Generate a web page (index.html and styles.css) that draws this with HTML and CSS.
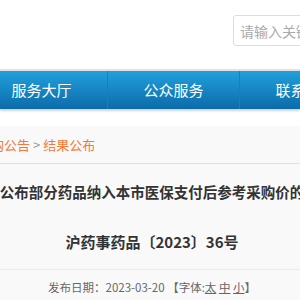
FILE: index.html
```html
<!DOCTYPE html>
<html lang="zh-CN">
<head>
  <meta charset="UTF-8">
  <title>结果公布</title>
  <link rel="stylesheet" href="styles.css">
</head>
<body>

  <div class="top">
    <div class="search">
      <input type="text" placeholder="请输入关键字">
    </div>
  </div>

  <div class="nav">
    <div class="nav-items">
      <a href="#">首页</a>
      <a href="#">服务大厅</a>
      <a href="#">公众服务</a>
      <a href="#">联系我们</a>
    </div>
  </div>

  <div class="content">
    <div class="crumbs">
      <a href="#">首页</a> &gt; <a href="#">采购公告</a> &gt; <a href="#">结果公布</a>
    </div>

    <div class="article">
      <h1>关于公布部分药品纳入本市医保支付后参考采购价的通知</h1>
      <h2>沪药事药品〔2023〕36号</h2>
      <div class="info">
        发布日期：2023-03-20 【字体:<a href="#">太</a> <a href="#">中</a> <a href="#">小</a>】
      </div>
    </div>
  </div>

</body>
</html>
```

FILE: styles.css
```css
html, body {
  margin: 0;
  padding: 0;
  overflow: hidden;
}

body {
  font-family: "Noto Sans CJK SC", "Microsoft YaHei", sans-serif;
  background: #fff;
  color: #333;
  width: 300px;
  height: 300px;
}

a {
  color: inherit;
  text-decoration: none;
}

.top {
  height: 69px;
  padding-left: 233px;
  box-sizing: border-box;
  padding-top: 15px;
}

.search input {
  width: 120px;
  height: 31px;
  box-sizing: border-box;
  border: 1px solid #ddd;
  border-radius: 3px;
  padding: 0 6px;
  font-family: inherit;
  font-size: 14px;
  color: #666;
  outline: none;
}

.search input::placeholder {
  color: #aaa;
}

.nav {
  border-top: 2px solid #e2e2e2;
  height: 38px;
  background: linear-gradient(to bottom, #22a0dc, #0b6ba9);
  box-shadow: 0 2px 2px rgba(0, 0, 0, 0.18);
  overflow: hidden;
}

.nav-items {
  display: flex;
  margin-left: -157px;
}

.nav-items a {
  flex: none;
  width: 132px;
  line-height: 38px;
  text-align: center;
  color: #fff;
  font-size: 15px;
  border-left: 1px solid #1a7fb8;
  box-sizing: border-box;
}

.content {
  margin-top: 17px;
  background: #f9f9f9;
  height: 200px;
  width: 300px;
  overflow: hidden;
}

.crumbs {
  padding: 8px 0 7px;
  line-height: 22px;
  font-size: 13px;
  color: #999;
  border-bottom: 1px solid #e0e0e0;
  margin-left: -61px;
  white-space: nowrap;
}

.crumbs a {
  color: #f5793b;
}

.article {
  width: 1000px;
  margin-left: -348px;
  text-align: center;
}

.article h1 {
  margin: 16px 0 0;
  font-size: 14.5px;
  line-height: 24px;
  font-weight: bold;
  color: #333;
  white-space: nowrap;
}

.article h2 {
  margin: 26px 0 0;
  font-size: 15px;
  line-height: 24px;
  font-weight: bold;
  color: #333;
  padding-bottom: 15px;
  border-bottom: 1px solid #ececec;
}

.info {
  padding-top: 7px;
  line-height: 20px;
  font-size: 11.5px;
  color: #666;
}

.info a {
  text-decoration: underline;
}
```
